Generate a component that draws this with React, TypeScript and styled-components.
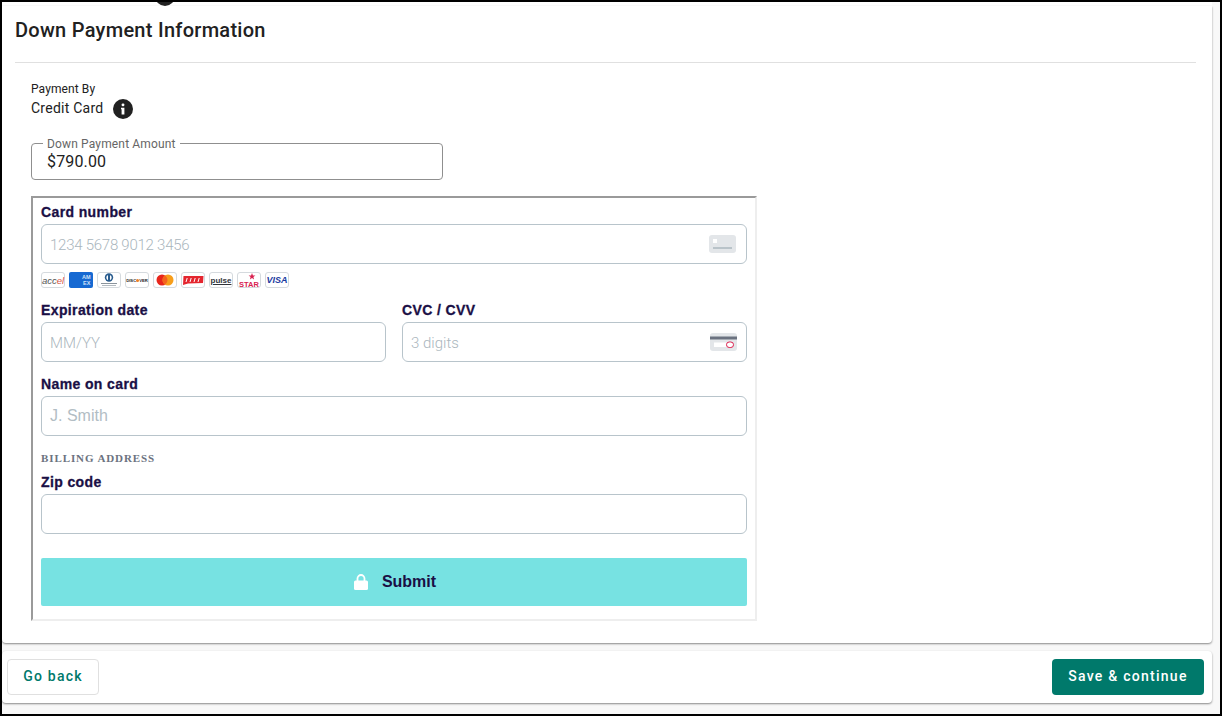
import React from 'react'
import styled, {createGlobalStyle} from 'styled-components'

const GlobalStyle = createGlobalStyle`
	html, body {
		margin: 0;
		padding: 0;
		background: #f8f8f8;
	}
	* {
		box-sizing: border-box;
	}
`

type BrandProps = {
	name: string
}

const brands = ['accel', 'amex', 'diners', 'discover', 'mastercard', 'nyce', 'pulse', 'star', 'visa']

const BrandArt = ({name}: BrandProps) => {
	switch (name) {
		case 'accel':
			return (
				<BrandText $color="#555" $size={9.5} $italic>
					acc<BrandAccent>el</BrandAccent>
				</BrandText>
			)
		case 'amex':
			return (
				<svg width="24" height="16" viewBox="0 0 24 16">
					<rect width="24" height="16" rx="2" fill="#1669d2" />
					<text x="13" y="7" fontSize="5.5" fontWeight="700" fontFamily="Liberation Sans" fill="#cfe2f8">
						AM
					</text>
					<text x="14" y="13" fontSize="5.5" fontWeight="700" fontFamily="Liberation Sans" fill="#cfe2f8">
						EX
					</text>
				</svg>
			)
		case 'diners':
			return (
				<svg width="22" height="14" viewBox="0 0 22 14">
					<circle cx="11" cy="4.5" r="4.2" fill="#2a5d8f" />
					<circle cx="11" cy="4.5" r="2.6" fill="#fff" />
					<rect x="10" y="2" width="2" height="5" fill="#2a5d8f" />
					<rect x="3" y="10" width="16" height="1" fill="#8b949c" />
					<rect x="4" y="12" width="14" height="1" fill="#b3bac0" />
				</svg>
			)
		case 'discover':
			return (
				<BrandText $color="#222" $size={4.2} $bold>
					DISC
					<BrandDot />
					VER
				</BrandText>
			)
		case 'mastercard':
			return (
				<svg width="18" height="12" viewBox="0 0 18 12">
					<circle cx="6" cy="6" r="5.5" fill="#e8261c" />
					<circle cx="12" cy="6" r="5.5" fill="#f79e1b" />
					<path d="M9 1.4a5.5 5.5 0 0 1 0 9.2a5.5 5.5 0 0 1 0-9.2z" fill="#f4631e" />
				</svg>
			)
		case 'nyce':
			return (
				<svg width="22" height="11" viewBox="0 0 22 11">
					<path d="M1.5 1h20l-.5 7-15 .5L1 10z" fill="#e4262f" />
					<path d="M4 7l1.2-4M8 7l1.2-4M12 7l1.2-4M16 7l1.2-4" stroke="#fff" strokeWidth="1" />
				</svg>
			)
		case 'pulse':
			return (
				<BrandText $color="#30343a" $size={8} $bold $underline>
					pulse
				</BrandText>
			)
		case 'star':
			return (
				<svg width="22" height="15" viewBox="0 0 22 15">
					<path d="M14 0l.9 2.4 2.5.1-2 1.5.7 2.4-2.1-1.4-2.1 1.4.7-2.4-2-1.5 2.5-.1z" fill="#d8204f" />
					<text x="11" y="14" textAnchor="middle" fontSize="7.5" fontWeight="700" fontFamily="Liberation Sans" fill="#d8204f">
						STAR
					</text>
				</svg>
			)
		default:
			return (
				<BrandText $color="#1a3aa0" $size={9} $bold $italic>
					VISA
				</BrandText>
			)
	}
}

const App = () => {
	return (
		<Frame>
			<GlobalStyle />
			<ClippedHeading>
				<ClippedCircle />
			</ClippedHeading>
			<Panel>
				<Title>Down Payment Information</Title>
				<Divider />
				<Body>
					<Caption>Payment By</Caption>
					<MethodRow>
						<MethodName>Credit Card</MethodName>
						<InfoBadge aria-label="info">
							<svg width="20" height="20" viewBox="0 0 20 20">
								<circle cx="10" cy="10" r="10" fill="#212121" />
								<rect x="8.6" y="4.4" width="2.8" height="2.8" rx="1.2" fill="#fff" />
								<path d="M8 8.8h3.4v6.6H8.6V10.2H8z" fill="#fff" />
							</svg>
						</InfoBadge>
					</MethodRow>
					<AmountField>
						<AmountLegend>Down Payment Amount</AmountLegend>
						<AmountValue>$790.00</AmountValue>
					</AmountField>
					<PaymentFrame>
						<FieldLabel>Card number</FieldLabel>
						<CardInput $iconInset={10}>
							<Placeholder $tracking={-0.25}>1234 5678 9012 3456</Placeholder>
							<svg width="27" height="18" viewBox="0 0 27 18">
								<rect width="27" height="18" rx="3" fill="#e3e6e9" />
								<rect x="4" y="4" width="4" height="4" fill="#fff" />
								<rect x="4" y="12" width="19" height="2" fill="#b9c3c9" />
							</svg>
						</CardInput>
						<BrandRow>
							{brands.map((name) => (
								<BrandChip key={name} $fill={name === 'amex'}>
									<BrandArt name={name} />
								</BrandChip>
							))}
						</BrandRow>
						<TwoColumns>
							<div>
								<FieldLabel>Expiration date</FieldLabel>
								<CardInput>
									<Placeholder>MM/YY</Placeholder>
								</CardInput>
							</div>
							<div>
								<FieldLabel>CVC / CVV</FieldLabel>
								<CardInput>
									<Placeholder>3 digits</Placeholder>
									<svg width="27" height="18" viewBox="0 0 27 18">
										<rect width="27" height="18" rx="3" fill="#e3e6e9" />
										<rect y="3.5" width="27" height="3" fill="#6b7280" />
										<rect x="4" y="9.5" width="14" height="4.5" fill="#fff" />
										<rect x="16.5" y="9" width="7" height="5.5" rx="2.7" fill="#fff" stroke="#dc1f4e" />
									</svg>
								</CardInput>
							</div>
						</TwoColumns>
						<SpacedLabel>Name on card</SpacedLabel>
						<CardInput>
							<NamePlaceholder>J. Smith</NamePlaceholder>
						</CardInput>
						<BillingHeading>BILLING ADDRESS</BillingHeading>
						<FieldLabel>Zip code</FieldLabel>
						<CardInput />
						<SubmitButton>
							<svg width="14" height="16" viewBox="0 0 14 16">
								<path d="M3.5 7V4.5a3.5 3.5 0 0 1 7 0V7" fill="none" stroke="#fff" strokeWidth="1.8" />
								<rect y="6.5" width="14" height="9.5" rx="1.5" fill="#fff" />
							</svg>
							Submit
						</SubmitButton>
					</PaymentFrame>
				</Body>
			</Panel>
			<Footer>
				<BackButton>Go back</BackButton>
				<SaveButton>Save &amp; continue</SaveButton>
			</Footer>
		</Frame>
	)
}

export default App

const Frame = styled.div`
	width: 1222px;
	height: 716px;
	overflow: hidden;
	border: 2px solid #000;
	background: #f8f8f8;
	font-family: Roboto, 'Liberation Sans', sans-serif;
	color: #212121;
`

const ClippedHeading = styled.div`
	height: 4px;
	background: #fff;
	width: 1210px;
	overflow: hidden;
	padding-left: 153px;
`

const ClippedCircle = styled.div`
	width: 20px;
	height: 20px;
	margin-top: -16px;
	border-radius: 50%;
	background: #212121;
`

const Panel = styled.section`
	width: 1210px;
	height: 637px;
	padding: 11px 16px 0 13px;
	background: #fff;
	border-radius: 0 0 4px 4px;
	box-shadow: 0 1px 2px rgba(0, 0, 0, 0.45);
`

const Title = styled.h2`
	margin: 0;
	height: 26px;
	font-size: 20px;
	line-height: 26px;
	font-weight: 500;
	letter-spacing: 0.28px;
	color: #212121;
`

const Divider = styled.hr`
	margin: 19px 0 0;
	border: 0;
	height: 1px;
	background: #e0e0e0;
`

const Body = styled.div`
	padding: 19px 0 0 16px;
`

const Caption = styled.div`
	font-size: 12px;
	line-height: 14px;
	letter-spacing: 0.1px;
	color: #212121;
`

const MethodRow = styled.div`
	display: flex;
	align-items: center;
	gap: 9px;
	height: 24px;
`

const MethodName = styled.span`
	font-size: 14px;
	letter-spacing: 0.25px;
`

const InfoBadge = styled.span`
	display: flex;
	width: 20px;
	height: 20px;
	margin-top: 2px;
`

const AmountField = styled.div`
	position: relative;
	width: 412px;
	height: 37px;
	margin-top: 23px;
	padding: 9px 15px 0;
	border: 1px solid #8f8f8f;
	border-radius: 4px;
`

const AmountLegend = styled.span`
	position: absolute;
	top: -7px;
	left: 11px;
	padding: 0 4px;
	background: #fff;
	font-size: 12px;
	line-height: 14px;
	letter-spacing: 0.15px;
	color: #666;
`

const AmountValue = styled.div`
	font-size: 16px;
	line-height: 18px;
	letter-spacing: 0.15px;
	color: #212121;
`

const PaymentFrame = styled.div`
	width: 726px;
	height: 425px;
	margin-top: 16px;
	padding: 8px 8px 0;
	border-style: solid;
	border-width: 2px;
	border-color: #9a9a9a #eeeeee #eeeeee #9a9a9a;
	font-family: 'Liberation Sans', Arial, sans-serif;
`

const FieldLabel = styled.div`
	height: 18px;
	font-size: 14px;
	line-height: 12px;
	font-weight: 700;
	letter-spacing: 0.38px;
	color: #1a0f45;
	-webkit-text-stroke: 0.3px #1a0f45;
`

const SpacedLabel = styled(FieldLabel)`
	margin-top: 16px;
`

const CardInput = styled.div<{$iconInset?: number}>`
	display: flex;
	align-items: center;
	justify-content: space-between;
	height: 40px;
	padding: 0 ${(p) => p.$iconInset ?? 9}px 0 8px;
	background: #fff;
	border: 1px solid #b8c4cb;
	border-radius: 6px;
`

const Placeholder = styled.span<{$tracking?: number}>`
	padding-top: 2px;
	font-family: Roboto, 'Liberation Sans', sans-serif;
	font-size: 15px;
	font-weight: 300;
	letter-spacing: ${(p) => p.$tracking ?? 0}px;
	color: #aab6bd;
`

const NamePlaceholder = styled.span`
	font-size: 16px;
	color: #b2bdc4;
`

const BrandRow = styled.div`
	display: flex;
	gap: 4px;
	margin-top: 8px;
	height: 17px;
`

const BrandChip = styled.span<{$fill: boolean}>`
	display: flex;
	align-items: center;
	justify-content: center;
	width: 24px;
	height: 16px;
	background: #fff;
	border: ${(p) => (p.$fill ? '0' : '1px solid #d5dade')};
	border-radius: 3px;
`

const BrandText = styled.span<{
	$color: string
	$size: number
	$bold?: boolean
	$italic?: boolean
	$underline?: boolean
}>`
	display: flex;
	align-items: center;
	font-family: 'Liberation Sans', sans-serif;
	font-size: ${(p) => p.$size}px;
	font-weight: ${(p) => (p.$bold ? 700 : 400)};
	font-style: ${(p) => (p.$italic ? 'italic' : 'normal')};
	text-decoration: ${(p) => (p.$underline ? 'underline' : 'none')};
	color: ${(p) => p.$color};
	white-space: nowrap;
`

const BrandAccent = styled.span`
	color: #d8533f;
`

const BrandDot = styled.i`
	width: 3px;
	height: 3px;
	border-radius: 50%;
	background: #ef7d22;
`

const TwoColumns = styled.div`
	display: grid;
	grid-template-columns: 345px 345px;
	gap: 16px;
	margin-top: 15px;
`

const BillingHeading = styled.div`
	margin-top: 15px;
	margin-bottom: 11px;
	height: 14px;
	font-family: 'Liberation Serif', serif;
	font-size: 11px;
	line-height: 14px;
	font-weight: 700;
	letter-spacing: 0.9px;
	color: #6b7280;
`

const SubmitButton = styled.button`
	display: flex;
	align-items: center;
	justify-content: center;
	gap: 14px;
	width: 100%;
	height: 48px;
	margin-top: 24px;
	padding: 0 0 0 2px;
	border: 0;
	border-radius: 2px;
	background: #77e2e2;
	font-family: 'Liberation Sans', sans-serif;
	font-size: 16px;
	font-weight: 700;
	color: #1a0f45;
`

const Footer = styled.footer`
	display: flex;
	align-items: center;
	justify-content: space-between;
	width: 1210px;
	height: 52px;
	margin-top: 8px;
	padding: 0 8px 0 5px;
	background: #fff;
	border-radius: 4px;
	box-shadow: 0 1px 2px rgba(0, 0, 0, 0.45);
`

const BaseButton = styled.button`
	height: 36px;
	padding: 0 0 2px;
	border-radius: 4px;
	font-family: Roboto, sans-serif;
	font-size: 14px;
	font-weight: 500;
	letter-spacing: 1.25px;
`

const BackButton = styled(BaseButton)`
	width: 92px;
	background: #fff;
	border: 1px solid #e0e0e0;
	color: #00796b;
`

const SaveButton = styled(BaseButton)`
	width: 152px;
	background: #00796b;
	border: 0;
	color: #fff;
`
